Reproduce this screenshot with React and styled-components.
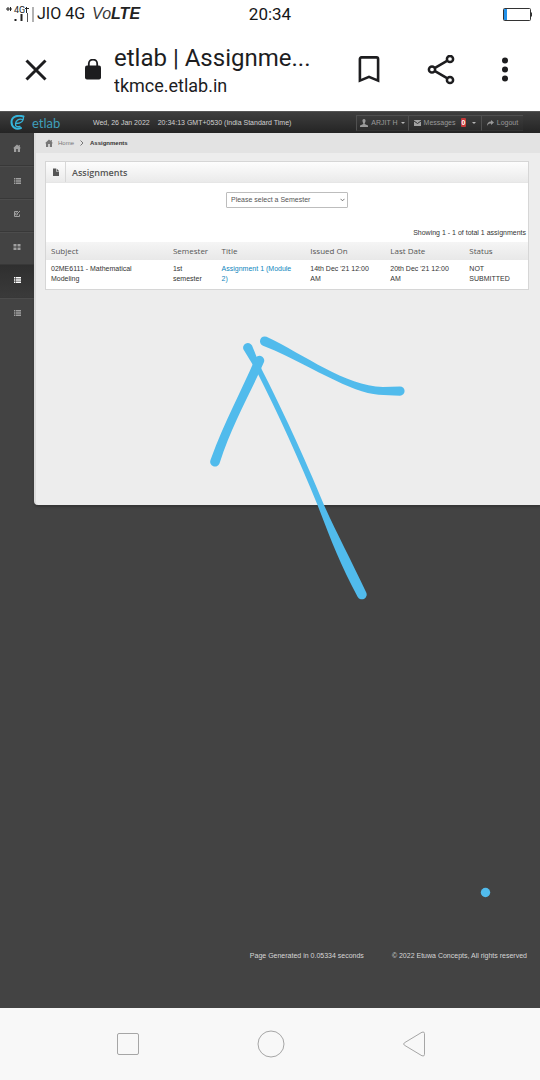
import React from "react";
import styled, { createGlobalStyle } from "styled-components";

const GlobalStyle = createGlobalStyle`
  * { box-sizing: border-box; }
  body { margin: 0; background: #434343; font-family: Roboto, "Liberation Sans", sans-serif; }
  button, select { font: inherit; margin: 0; }
`;

const Screen = styled.div`
  min-height: 100vh;
  display: flex;
  flex-direction: column;
`;

/* Phone status bar */
const StatusBar = styled.div`
  display: grid;
  grid-template-columns: 1fr auto 1fr;
  align-items: center;
  height: 28px;
  padding: 0 8px;
  background: #fff;
  color: #161616;
  font-size: 17px;
  line-height: 28px;
`;
const Carrier = styled.div`
  display: flex;
  align-items: center;
  margin-left: -2px;
  font-size: 16px;
  white-space: nowrap;
  svg { flex: none; }
`;
const Volte = styled.span`
  margin-left: 7px;
  color: #3a3a3a;
  font-family: "Liberation Sans", sans-serif;
  font-size: 16px;
  font-style: italic;
  b { color: #222; }
`;
const Battery = styled.svg`
  justify-self: end;
`;

/* Browser tab bar */
const BrowserBar = styled.header`
  display: flex;
  align-items: center;
  height: 83px;
  padding: 0 20px;
  background: #fff;
  color: #1d1d1f;
`;
const IconButton = styled.button`
  display: grid;
  place-items: center;
  flex: none;
  width: ${(p) => p.$width || 32}px;
  height: 32px;
  padding: 0;
  border: 0;
  background: none;
  color: inherit;
`;
const Lock = styled.svg`
  flex: none;
  margin: 0 12px 0 32px;
`;
const PageInfo = styled.div`
  flex: 1;
  min-width: 0;
  padding-top: 2px;
  white-space: nowrap;
  overflow: hidden;
`;
const PageTitle = styled.div`
  font-size: 24px;
  line-height: 30px;
`;
const PageHost = styled.div`
  font-size: 18px;
  line-height: 26px;
`;
const Actions = styled.div`
  display: flex;
  gap: 40px;
  margin-right: 7px;
`;

/* Web page */
const Site = styled.div`
  position: relative;
  flex: 1;
  display: flex;
  flex-direction: column;
  background: #434343;
  font-family: "Liberation Sans", Arial, sans-serif;
  font-size: 7px;
  line-height: 10px;
`;
const TopBar = styled.div`
  display: flex;
  align-items: center;
  height: 22px;
  padding: 0 17px 0 10px;
  background: linear-gradient(#3e3e3e, #242424);
  border-top: 1px solid #555;
  color: #d0d0d0;
`;
const Brand = styled.a`
  display: flex;
  align-items: center;
  gap: 7px;
  width: 83px;
  color: #3f9fbb;
  font-family: Lato, sans-serif;
  font-size: 13px;
  line-height: 16px;
  text-decoration: none;
`;
const Clock = styled.div`
  display: flex;
  gap: 8px;
  flex: 1;
  white-space: nowrap;
`;
const UserMenu = styled.div`
  display: flex;
`;
const MenuButton = styled.button`
  display: flex;
  align-items: center;
  justify-content: center;
  gap: 3px;
  width: ${(p) => p.$width}px;
  height: 16px;
  padding: 0;
  border: 1px solid #505050;
  border-bottom-color: #333;
  border-right: 0;
  background: linear-gradient(#3c3c3c, #2b2b2b);
  color: #999;
  white-space: nowrap;
`;
const Badge = styled.span`
  margin: 0 3px 0 2px;
  padding: 0 1px;
  border-radius: 1px;
  background: #c63a3a;
  color: #fff;
  font-weight: 700;
  line-height: 9px;
`;
const Caret = styled.span`
  border: 2px solid transparent;
  border-top-color: #b5b5b5;
  border-bottom: 0;
`;

const Body = styled.div`
  flex: 1;
  display: flex;
  align-items: flex-start;
`;
const Sidebar = styled.nav`
  display: flex;
  flex-direction: column;
  width: 34px;
  flex: none;
`;
const SideLink = styled.a`
  display: grid;
  place-items: center;
  height: 33px;
  padding-bottom: 2px;
  border-bottom: 1px solid #383838;
  box-shadow: 0 1px 0 #4c4c4c;
  background: ${(p) => (p.$active ? "linear-gradient(#2f2f2f, #3a3a3a)" : "none")};
  color: ${(p) => (p.$active ? "#fff" : "#a0a0a0")};
  &:last-child { border-bottom-color: transparent; box-shadow: none; }
`;
const Main = styled.main`
  flex: 1;
  min-width: 0;
  min-height: 372px;
  border-left: 2px solid #dcdcdc;
  border-radius: 0 0 0 4px;
  background: #ededed;
  box-shadow: 0 2px 2px #363636;
`;
const Breadcrumb = styled.div`
  display: flex;
  align-items: center;
  height: 20px;
  padding-left: 9px;
  background: #e3e3e3;
  color: #777;
  a { margin: 0 6px 0 5px; color: inherit; font-size: 6px; text-decoration: none; }
  b { margin-left: 6px; color: #333; font-size: 6px; }
`;
const Panel = styled.section`
  margin: 8px 11px 0 9px;
  border: 1px solid #d6d6d6;
  background: #fff;
`;
const PanelHeader = styled.div`
  display: flex;
  align-items: center;
  height: 21px;
  background: linear-gradient(#fdfdfd, #eaeaea);
  border-bottom: 1px solid #e6e6e6;
  color: #555;
`;
const PanelIcon = styled.div`
  display: grid;
  place-items: center;
  width: 20px;
  height: 20px;
  border-right: 1px solid #d8d8d8;
`;
const PanelTitle = styled.h1`
  margin: 0 0 0 6px;
  padding-top: 2px;
  font-family: "Open Sans", sans-serif;
  font-size: 9px;
  font-weight: 600;
  line-height: 20px;
`;
const Filter = styled.div`
  display: flex;
  justify-content: center;
  padding-top: 9px;
`;
const SelectWrap = styled.label`
  position: relative;
  width: 122px;
  svg { position: absolute; right: 3px; top: 6px; }
`;
const Select = styled.select`
  display: block;
  width: 100%;
  height: 16px;
  padding: 0 4px;
  appearance: none;
  border: 1px solid #bdbdbd;
  border-radius: 1px;
  background: #fff;
  color: #555;
  line-height: 14px;
`;
const Summary = styled.div`
  padding: 20px 2px 4px;
  text-align: right;
  color: #333;
`;
const Table = styled.table`
  width: 100%;
  table-layout: fixed;
  border-collapse: collapse;
`;
const HeadCell = styled.th`
  width: ${(p) => p.$width}%;
  height: 18px;
  padding: 0 0 0 5px;
  background: linear-gradient(#f5f5f5, #e8e8e8);
  color: #555;
  font-family: "Open Sans", sans-serif;
  font-size: 8px;
  font-weight: 500;
  text-align: left;
`;
const Cell = styled.td`
  padding: 4px 10px 5px 5px;
  color: #333;
  vertical-align: top;
  a { color: #0f86bd; text-decoration: none; }
`;
const Footer = styled.footer`
  display: flex;
  justify-content: flex-end;
  gap: 28px;
  padding: 0 13px 47px;
  color: #d6d6d6;
`;
const Annotation = styled.svg`
  position: absolute;
  left: 0;
  top: 0;
  pointer-events: none;
`;

/* Android navigation */
const SystemNav = styled.nav`
  display: flex;
  align-items: center;
  justify-content: space-around;
  height: 72px;
  padding: 0 54px 0 56px;
  background: #f8f8f8;
  color: #a6a6a6;
`;

const ListIcon = () => (
  <svg width="8" height="8" viewBox="0 0 8 8" fill="currentColor">
    <path d="M1 1h1.400v1.500H1zM3 1h5v1.500H3zM1 3.200h1.400v1.500H1zM3 3.200h5v1.500H3zM1 5.400h1.400v1.500H1zM3 5.400h5v1.500H3z" />
  </svg>
);
const HomeIcon = () => (
  <svg width="8" height="8" viewBox="0 0 8 8" fill="currentColor">
    <path d="M4 0.5 0 4.2h1V8h2.2V5h1.6v3H7V4.2h1L6.8 3V1H5.7v1z" />
  </svg>
);
const EditIcon = () => (
  <svg width="8" height="8" viewBox="0 0 8 8" fill="none" stroke="currentColor">
    <path d="M5 1.5H1.500v5h5V4.500M3.500 4.500 7 1" />
    <circle cx="3.500" cy="4" r="1.200" strokeWidth=".8" />
  </svg>
);
const GridIcon = () => (
  <svg width="8" height="8" viewBox="0 0 8 8" fill="currentColor">
    <path d="M0.500 1h3v2.500h-3zM4.500 1h3v2.500h-3zM0.500 4.500h3V7h-3zM4.500 4.500h3V7h-3z" />
  </svg>
);

const sideItems = [
  ["Home", HomeIcon],
  ["Subjects", ListIcon],
  ["Tests", EditIcon],
  ["Modules", GridIcon],
  ["Assignments", ListIcon],
  ["Results", ListIcon],
];

const columns = [
  ["Subject", 25.3],
  ["Semester", 10.1],
  ["Title", 18.4],
  ["Issued On", 16.6],
  ["Last Date", 16.4],
  ["Status", 13.2],
];

export default function App() {
  return (
    <Screen>
      <GlobalStyle />
      <StatusBar>
        <Carrier>
          <svg width="31" height="18" viewBox="0 0 31 18">
            <g stroke="#222" fill="none">
              <path d="M0 4h6M2 2v4M4.500 2v4M20.500 2v6M19 3.500h4" />
              <path d="M9.500 14v2M15.500 9v7" strokeWidth="2" />
              <path d="M21.500 8v9" stroke="#555" />
              <path d="M27 2v15" stroke="#999" strokeWidth="1.500" />
            </g>
            <text x="8" y="8" fontSize="9" fill="#222">4G</text>
          </svg>
          JIO 4G
          <Volte>Vo<b>LTE</b></Volte>
        </Carrier>
        <span>20:34</span>
        <Battery width="29" height="13" viewBox="0 0 29 13">
          <rect x=".5" y=".5" width="27" height="12" rx="1" fill="#fff" stroke="#333" />
          <rect x="1" y="1" width="3" height="11" fill="#2492ea" />
          <path d="M28 4.500v4" stroke="#333" strokeWidth="2" />
        </Battery>
      </StatusBar>

      <BrowserBar>
        <IconButton aria-label="Close">
          <svg width="22" height="22" viewBox="0 0 22 22" stroke="currentColor" strokeWidth="3">
            <path d="m1.500 1.500 19 19M20.500 1.500l-19 19" />
          </svg>
        </IconButton>
        <Lock width="18" height="22" viewBox="0 0 18 22">
          <rect x="1" y="6.500" width="16" height="14" rx="2" fill="currentColor" />
          <path d="M4.800 8V4.700a4.200 4.200 0 0 1 8.400 0V8" fill="none" stroke="currentColor" strokeWidth="1.800" />
        </Lock>
        <PageInfo>
          <PageTitle>etlab | Assignme...</PageTitle>
          <PageHost>tkmce.etlab.in</PageHost>
        </PageInfo>
        <Actions>
          <IconButton aria-label="Bookmark">
            <svg width="22" height="28" viewBox="0 0 22 28" fill="none" stroke="currentColor" strokeWidth="2.600">
              <path d="M1.900 24.600V3Q1.900 1.400 3.500 1.400h15q1.600 0 1.600 1.600V24.600L11 20.800z" />
            </svg>
          </IconButton>
          <IconButton aria-label="Share">
            <svg width="28" height="30" viewBox="0 0 28 30" fill="none" stroke="currentColor" strokeWidth="2.500">
              <circle cx="5" cy="14.500" r="3.100" />
              <circle cx="23" cy="4" r="3.100" />
              <circle cx="23" cy="25" r="3.100" />
              <path d="m8 12.800 12-7M8 16.200l12 7" />
            </svg>
          </IconButton>
          <IconButton aria-label="More" $width={16}>
            <svg width="6" height="26" viewBox="0 0 6 26" fill="currentColor">
              <circle cx="3" cy="3.500" r="3" />
              <circle cx="3" cy="12.500" r="3" />
              <circle cx="3" cy="21.500" r="3" />
            </svg>
          </IconButton>
        </Actions>
      </BrowserBar>

      <Site>
        <TopBar>
          <Brand href="#home">
            <svg width="15" height="15" viewBox="0 0 15 15" fill="none" stroke="#35b5dc" strokeLinecap="round">
              <path d="M13.500 1.500C7-.5 1.500 2 1.500 7s4 8 9.500 6" strokeWidth="2" />
              <path d="M13.500 2.500c0 4-3 6-7.500 6M12.500 4.500C9 3.500 6 5 5.500 8.500s2 3.500 4.500 3" strokeWidth="1.300" />
            </svg>
            etlab
          </Brand>
          <Clock>
            <span>Wed, 26 Jan 2022</span>
            <span>20:34:13 GMT+0530 (India Standard Time)</span>
          </Clock>
          <UserMenu>
            <MenuButton $width={52}>
              <svg width="8" height="8" viewBox="0 0 8 8" fill="currentColor">
                <path d="M4 0C2.600 0 2.300 1 2.500 2.300S3.300 4 3.300 5L0 6.500V8h8V6.500L4.700 5c0-1 .6-1.400.8-2.700S5.400 0 4 0z" />
              </svg>
              ARJIT H
              <Caret />
            </MenuButton>
            <MenuButton $width={73}>
              <svg width="7" height="6" viewBox="0 0 7 6">
                <rect width="7" height="6" fill="#a2a2a2" />
                <path d="m0 1 3.500 2.500L7 1" fill="none" stroke="#333" />
              </svg>
              Messages
              <Badge>0</Badge>
              <Caret />
            </MenuButton>
            <MenuButton $width={42}>
              <svg width="7" height="6" viewBox="0 0 7 6" fill="currentColor">
                <path d="M4 0 7 2.500 4 5V3.500C2 3.500 1 4 0 6c0-3 1.500-4.500 4-4.500z" />
              </svg>
              Logout
            </MenuButton>
          </UserMenu>
        </TopBar>

        <Body>
          <Sidebar>
            {sideItems.map(([name, Icon]) => (
              <SideLink key={name} href="#" aria-label={name} $active={name === "Assignments"}>
                <Icon />
              </SideLink>
            ))}
          </Sidebar>
          <Main>
            <Breadcrumb>
              <HomeIcon />
              <a href="#home">Home</a>
              <svg width="4" height="6" viewBox="0 0 4 6" fill="none" stroke="#777">
                <path d="m.5.5 2.500 2.500L.5 5.500" />
              </svg>
              <b>Assignments</b>
            </Breadcrumb>
            <Panel>
              <PanelHeader>
                <PanelIcon>
                  <svg width="6" height="8" viewBox="0 0 6 8" fill="currentColor">
                    <path d="M0 .5h3v3h3V8H0zM3.600.5 6 3H3.600z" />
                  </svg>
                </PanelIcon>
                <PanelTitle>Assignments</PanelTitle>
              </PanelHeader>
              <Filter>
                <SelectWrap>
                  <Select aria-label="Semester" defaultValue="">
                    <option value="">Please select a Semester</option>
                  </Select>
                  <svg width="5" height="4" viewBox="0 0 5 4" fill="none" stroke="#555" strokeWidth=".8">
                    <path d="m.5.800 2 2 2-2" />
                  </svg>
                </SelectWrap>
              </Filter>
              <Summary>Showing 1 - 1 of total 1 assignments</Summary>
              <Table>
                <thead>
                  <tr>
                    {columns.map(([label, width]) => (
                      <HeadCell key={label} $width={width}>{label}</HeadCell>
                    ))}
                  </tr>
                </thead>
                <tbody>
                  <tr>
                    <Cell>02ME6111 - Mathematical Modeling</Cell>
                    <Cell>1st semester</Cell>
                    <Cell><a href="#assignment">Assignment 1 (Module 2)</a></Cell>
                    <Cell>14th Dec '21 12:00 AM</Cell>
                    <Cell>20th Dec '21 12:00 AM</Cell>
                    <Cell>NOT SUBMITTED</Cell>
                  </tr>
                </tbody>
              </Table>
            </Panel>
          </Main>
        </Body>

        <Footer>
          <span>Page Generated in 0.05334 seconds</span>
          <span>© 2022 Etuwa Concepts, All rights reserved</span>
        </Footer>

        <Annotation width="540" height="897" viewBox="0 111 540 897" fill="#51bbec">
          <path d="M243.500 349.500a4.700 4.700 0 0 1 8.500-4L262 370 C280 405 304 456 324 505 C336 532 350 558 366 592a4.700 4.700 0 0 1-8.300 5C340 564 331 540 317.500 505 C300 462 278 413 256 370z" />
          <path d="M255 359a4.700 4.700 0 0 1 9 3C250 394 232 424 219.500 463.500a4.700 4.700 0 0 1-9-3.500C225 420 241 392 255 359z" />
          <path d="M266.500 336.800C305 355 345 386 383 387L400 386.500a4.500 4.500 0 0 1 0 9.200C384 395 374 396 355 389 C320 375 295 358 263 345.700a4.700 4.700 0 0 1 3.500-8.900z" />
          <circle cx="485.500" cy="892.500" r="4.700" />
        </Annotation>
      </Site>

      <SystemNav>
        <IconButton aria-label="Recent apps">
          <svg width="22" height="22" viewBox="0 0 22 22" fill="none" stroke="currentColor">
            <rect x=".5" y=".5" width="21" height="21" rx="1.500" />
          </svg>
        </IconButton>
        <IconButton aria-label="Home">
          <svg width="28" height="28" viewBox="0 0 28 28" fill="none" stroke="currentColor">
            <circle cx="14" cy="14" r="13" />
          </svg>
        </IconButton>
        <IconButton aria-label="Back">
          <svg width="22" height="26" viewBox="0 0 22 26" fill="none" stroke="currentColor">
            <path d="M1.400 11.800 19 1.200q2.500-.9 2.500 1.500v20.600q0 2.400-2.500 1.500L1.400 14.200q-1.600-1.200 0-2.400z" />
          </svg>
        </IconButton>
      </SystemNav>
    </Screen>
  );
}
